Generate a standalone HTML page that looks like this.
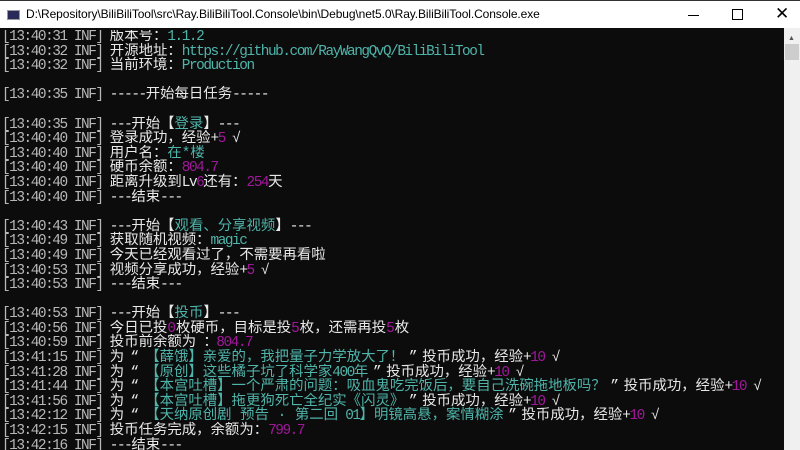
<!DOCTYPE html>
<html><head><meta charset="utf-8"><style>
html,body{margin:0;padding:0;width:800px;height:450px;overflow:hidden;background:#0c0c0c}
.tb{position:absolute;left:0;top:0;width:800px;height:28px;background:#fff;border-top:1px solid #333;box-sizing:border-box}
.tt{position:absolute;left:26px;top:6px;font:12px "Liberation Sans",sans-serif;color:#000;white-space:nowrap;letter-spacing:-0.1px}
.ic{position:absolute;left:7px;top:9px;width:13px;height:10px;background:#2a2a5a;border:1px solid #999;box-sizing:border-box}
.sb{position:absolute;left:784px;top:28px;width:16px;height:422px;background:#f0f0f0}
.th{position:absolute;left:785px;top:44px;width:14px;height:16px;background:#cdcdcd}
.con{position:absolute;left:2px;top:30px;width:782px;height:420px;overflow:hidden;font-family:"Liberation Mono","Noto Sans CJK SC",monospace;font-size:14.4px;line-height:14.6px;color:#e8e8e8;letter-spacing:-1.45px}
.con div{height:14.6px;white-space:pre;overflow:visible}
.g{color:#b8b8b8}.c{color:#4fb4aa}.m{color:#a0189a}
.z{letter-spacing:0}
.q{display:inline-block;width:21px;text-align:center}
.q2{display:inline-block;width:18px;text-align:center}
</style></head><body>
<div class="tb"><div class="ic"></div><div class="tt">D:\Repository\BiliBiliTool\src\Ray.BiliBiliTool.Console\bin\Debug\net5.0\Ray.BiliBiliTool.Console.exe</div>
<div style="position:absolute;left:688px;top:14px;width:11px;height:1px;background:#000"></div>
<div style="position:absolute;left:732px;top:8px;width:9px;height:9px;border:1px solid #000"></div>
<div style="position:absolute;left:775px;top:3px;font:17px 'Liberation Sans',sans-serif;color:#000">✕</div>
</div>
<div class="sb"><div style="position:absolute;left:4px;top:6px;font-size:7px;color:#555">▲</div></div><div class="th"></div>
<div class="con">
<div><span class="g">[13:40:31 INF]</span> <span class="z">版本号：</span><span class="c">1.1.2</span></div>
<div><span class="g">[13:40:32 INF]</span> <span class="z">开源地址：</span><span class="c">https://github.com/RayWangQvQ/BiliBiliTool</span></div>
<div><span class="g">[13:40:32 INF]</span> <span class="z">当前环境：</span><span class="c">Production</span></div>
<div></div>
<div><span class="g">[13:40:35 INF]</span> -----<span class="z">开始每日任务</span>-----</div>
<div></div>
<div><span class="g">[13:40:35 INF]</span> ---<span class="z">开始【<span class="c">登录</span>】</span>---</div>
<div><span class="g">[13:40:40 INF]</span> <span class="z">登录成功，经验</span>+<span class="m">5</span> √</div>
<div><span class="g">[13:40:40 INF]</span> <span class="z">用户名：<span class="c">在*楼</span></span></div>
<div><span class="g">[13:40:40 INF]</span> <span class="z">硬币余额：</span><span class="m">804.7</span></div>
<div><span class="g">[13:40:40 INF]</span> <span class="z">距离升级到</span>Lv<span class="m">6</span><span class="z">还有：</span><span class="m">254</span><span class="z">天</span></div>
<div><span class="g">[13:40:40 INF]</span> ---<span class="z">结束</span>---</div>
<div></div>
<div><span class="g">[13:40:43 INF]</span> ---<span class="z">开始【<span class="c">观看、分享视频</span>】</span>---</div>
<div><span class="g">[13:40:49 INF]</span> <span class="z">获取随机视频：</span><span class="c">magic</span></div>
<div><span class="g">[13:40:49 INF]</span> <span class="z">今天已经观看过了，不需要再看啦</span></div>
<div><span class="g">[13:40:53 INF]</span> <span class="z">视频分享成功，经验</span>+<span class="m">5</span> √</div>
<div><span class="g">[13:40:53 INF]</span> ---<span class="z">结束</span>---</div>
<div></div>
<div><span class="g">[13:40:53 INF]</span> ---<span class="z">开始【<span class="c">投币</span>】</span>---</div>
<div><span class="g">[13:40:56 INF]</span> <span class="z">今日已投<span class="m">0</span>枚硬币，目标是投<span class="m">5</span>枚，还需再投<span class="m">5</span>枚</span></div>
<div><span class="g">[13:40:59 INF]</span> <span class="z">投币前余额为</span> ：<span class="m">804.7</span></div>
<div><span class="g">[13:41:15 INF]</span> <span class="z">为<span class="q">“</span><span class="c">【薛饿】亲爱的，我把量子力学放大了！</span><span class="q2">”</span>投币成功，经验</span>+<span class="m">10</span> √</div>
<div><span class="g">[13:41:28 INF]</span> <span class="z">为<span class="q">“</span><span class="c">【原创】这些橘子坑了科学家</span></span><span class="c">400</span><span class="z"><span class="c">年</span><span class="q2">”</span>投币成功，经验</span>+<span class="m">10</span> √</div>
<div><span class="g">[13:41:44 INF]</span> <span class="z">为<span class="q">“</span><span class="c">【本宫吐槽】一个严肃的问题：吸血鬼吃完饭后，要自己洗碗拖地板吗？</span><span class="q2">”</span>投币成功，经验</span>+<span class="m">10</span> √</div>
<div><span class="g">[13:41:56 INF]</span> <span class="z">为<span class="q">“</span><span class="c">【本宫吐槽】拖更狗死亡全纪实《闪灵》</span><span class="q2">”</span>投币成功，经验</span>+<span class="m">10</span> √</div>
<div><span class="g">[13:42:12 INF]</span> <span class="z">为<span class="q">“</span><span class="c">【天纳原创剧 预告 · 第二回</span></span> <span class="c">01</span><span class="z"><span class="c">】明镜高悬，案情糊涂</span><span class="q2">”</span>投币成功，经验</span>+<span class="m">10</span> √</div>
<div><span class="g">[13:42:15 INF]</span> <span class="z">投币任务完成，余额为：</span><span class="m">799.7</span></div>
<div><span class="g">[13:42:16 INF]</span> ---<span class="z">结束</span>---</div>
</div>
</body></html>
